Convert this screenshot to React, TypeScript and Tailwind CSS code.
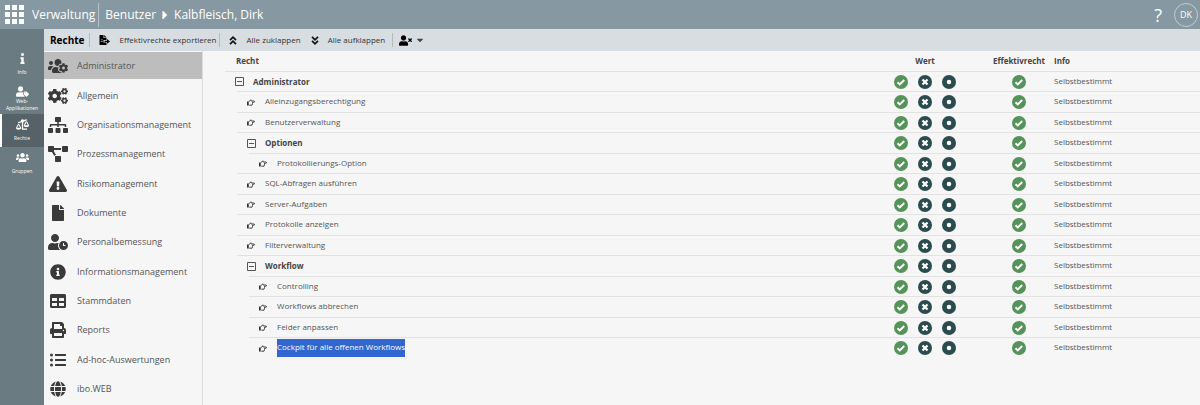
import type { ReactNode } from "react";
import {
  FaBalanceScaleLeft,
  FaCaretDown,
  FaCaretRight,
  FaCogs,
  FaExclamationTriangle,
  FaFile,
  FaGlobe,
  FaInfo,
  FaInfoCircle,
  FaListUl,
  FaPrint,
  FaProjectDiagram,
  FaSitemap,
  FaTable,
  FaUserClock,
  FaUsers,
  FaUsersCog,
  FaUserTag,
  FaUserTimes,
} from "react-icons/fa";

const navItems = [
  { label: "Info", icon: <FaInfo size={11} /> },
  { label: "Web-Applikationen", icon: <FaUserTag size={13} /> },
  { label: "Rechte", icon: <FaBalanceScaleLeft size={13} />, active: true },
  { label: "Gruppen", icon: <FaUsers size={13} /> },
];

const menuItems = [
  { label: "Administrator", icon: <FaUsersCog size={20} />, active: true },
  { label: "Allgemein", icon: <FaCogs size={20} /> },
  { label: "Organisationsmanagement", icon: <FaSitemap size={20} /> },
  { label: "Prozessmanagement", icon: <FaProjectDiagram size={20} /> },
  { label: "Risikomanagement", icon: <FaExclamationTriangle size={18} /> },
  { label: "Dokumente", icon: <FaFile size={16} /> },
  { label: "Personalbemessung", icon: <FaUserClock size={20} /> },
  { label: "Informationsmanagement", icon: <FaInfoCircle size={16} /> },
  { label: "Stammdaten", icon: <FaTable size={16} /> },
  { label: "Reports", icon: <FaPrint size={16} /> },
  { label: "Ad-hoc-Auswertungen", icon: <FaListUl size={16} /> },
  { label: "ibo.WEB", icon: <FaGlobe size={16} /> },
];

type Right = { name: string; depth: number; group?: boolean; selected?: boolean };

const rights: Right[] = [
  { name: "Administrator", depth: 0, group: true },
  { name: "Alleinzugangsberechtigung", depth: 1 },
  { name: "Benutzerverwaltung", depth: 1 },
  { name: "Optionen", depth: 1, group: true },
  { name: "Protokollierungs-Option", depth: 2 },
  { name: "SQL-Abfragen ausführen", depth: 1 },
  { name: "Server-Aufgaben", depth: 1 },
  { name: "Protokolle anzeigen", depth: 1 },
  { name: "Filterverwaltung", depth: 1 },
  { name: "Workflow", depth: 1, group: true },
  { name: "Controlling", depth: 2 },
  { name: "Workflows abbrechen", depth: 2 },
  { name: "Felder anpassen", depth: 2 },
  { name: "Cockpit für alle offenen Workflows", depth: 2, selected: true },
];

const indents = ["ml-0", "ml-3", "ml-6"];

function CheckIcon() {
  return (
    <svg viewBox="0 0 28 28" className="size-[14px]" aria-hidden="true">
      <circle cx="14" cy="14" r="14" fill="#56935a" />
      <path d="M7 14.500l4.500 4.500 9-9" fill="none" stroke="#fff" strokeWidth="3.800" />
    </svg>
  );
}

function CrossIcon() {
  return (
    <svg viewBox="0 0 28 28" className="size-[14px]" aria-hidden="true">
      <circle cx="14" cy="14" r="14" fill="#2b4b4e" />
      <path d="M9 9l10 10M19 9L9 19" fill="none" stroke="#fff" strokeWidth="4.500" />
    </svg>
  );
}

function DotIcon() {
  return (
    <svg viewBox="0 0 28 28" className="size-[14px]" aria-hidden="true">
      <circle cx="14" cy="14" r="14" fill="#2b4b4e" />
      <circle cx="14" cy="14" r="4.500" fill="#fff" />
    </svg>
  );
}

function MinusIcon() {
  return (
    <svg viewBox="0 0 9 9" className="size-[9px]" fill="none" stroke="#555" aria-hidden="true">
      <path d="M.5.5h8v8h-8zM2 4.500h5" />
    </svg>
  );
}

function HandIcon() {
  return (
    <svg viewBox="0 0 16 14" className="h-[7px] w-2" aria-hidden="true">
      <path d="M0 5h3.500v8H0z" fill="#333" />
      <path
        d="M4 5.500L7.500 1.500l1 2.500h5.500q1 0 1 1.200t-1 1.200H11v3l-1 3H4.500"
        fill="none"
        stroke="#333"
        strokeWidth="1.800"
      />
    </svg>
  );
}

function ExportIcon() {
  return (
    <svg viewBox="0 0 22 20" className="h-[10px] w-[11px]" aria-hidden="true">
      <path d="M1 0h8v6h6v4h-6v5h6v5H1zM10.500 0L15 4.800h-4.500z" />
      <path d="M11 11.500h5V8l6 4.800-6 4.700V14h-5z" />
      <path d="M3.500 9.500h4M3.500 13h4" stroke="#d8dde1" strokeWidth="1.200" />
    </svg>
  );
}

function DoubleChevron({ down }: { down?: boolean }) {
  return (
    <svg
      viewBox="0 0 8 9"
      className={down ? "h-[9px] w-2 rotate-180" : "h-[9px] w-2"}
      fill="none"
      stroke="#111"
      strokeWidth="1.700"
      aria-hidden="true"
    >
      <path d="M1 4.200l3-3 3 3M1 8.200l3-3 3 3" />
    </svg>
  );
}

function ToolButton({ icon, children }: { icon: ReactNode; children: ReactNode }) {
  return (
    <button className="flex items-center gap-[9px] text-[8px] text-[#333]">
      {icon}
      {children}
    </button>
  );
}

function Divider() {
  return <span className="h-[14px] w-px bg-[#b4babd]" />;
}

export default function App() {
  return (
    <div className="flex min-h-screen flex-col bg-[#f6f6f6] font-['Open_Sans',sans-serif] text-[#555]">
      <header className="flex h-[29px] items-center bg-[#8698a1] pr-[2px] pl-[5px] text-[12px] text-white">
        <button aria-label="Anwendungen" className="mr-2">
          <svg viewBox="0 0 19 19" className="size-[19px]" fill="#fff">
            <path d="M0 0h5v5H0zM7 0h5v5H7zM14 0h5v5h-5zM0 7h5v5H0zM7 7h5v5H7zM14 7h5v5h-5zM0 14h5v5H0zM7 14h5v5H7zM14 14h5v5h-5z" />
          </svg>
        </button>
        <a href="#">Verwaltung</a>
        <span className="mr-[6px] ml-[3px] h-6 w-px bg-[#b6c1c7]" />
        <a href="#">Benutzer</a>
        <FaCaretRight size={14} className="mx-[2px]" />
        <h1>Kalbfleisch, Dirk</h1>
        <button className="ml-auto text-[18px] leading-6">?</button>
        <button className="ml-3 size-6 rounded-full border border-[#c3ccd1] text-[9px]">DK</button>
      </header>

      <div className="flex grow">
        <nav className="w-11 shrink-0 bg-[#6b7b82] pt-[19px]">
          {navItems.map((item) => (
            <a
              key={item.label}
              href="#"
              className={
                item.active
                  ? "flex h-[33px] flex-col items-center border-l-2 border-white bg-[#566267] pt-1 pr-[2px] text-white"
                  : "flex h-[33px] flex-col items-center pt-1 text-white"
              }
            >
              <span className="flex h-[13px] items-center">{item.icon}</span>
              <span className="flex h-[14px] items-center text-center text-[5px] leading-[7px]">
                {item.label}
              </span>
            </a>
          ))}
        </nav>

        <div className="flex min-w-0 grow flex-col">
          <div className="flex h-[22px] items-center bg-[#d8dde1] pl-[6px]">
            <h2 className="mr-[5px] text-[10px] font-bold text-black">Rechte</h2>
            <Divider />
            <div className="mr-[3px] ml-[9px]">
              <ToolButton icon={<ExportIcon />}>Effektivrechte exportieren</ToolButton>
            </div>
            <Divider />
            <div className="mr-[7px] ml-[9px] flex items-center gap-[10px]">
              <ToolButton icon={<DoubleChevron />}>Alle zuklappen</ToolButton>
              <ToolButton icon={<DoubleChevron down />}>Alle aufklappen</ToolButton>
            </div>
            <Divider />
            <button aria-label="Benutzerrechte" className="ml-[6px] flex items-center gap-[3px] text-black">
              <FaUserTimes size={13} />
              <FaCaretDown size={10} className="text-[#444]" />
            </button>
          </div>

          <div className="flex grow">
            <ul className="w-[159px] shrink-0 border-r border-[#dcdcdc] pt-px">
              {menuItems.map((item) => (
                <li key={item.label} className="h-[29px] nth-[3n+1]:h-[30px]">
                  <a
                    href="#"
                    className={
                      item.active
                        ? "flex h-[27px] items-center gap-[9px] bg-[#bdbdbd] pl-1 text-[9px]"
                        : "flex h-[27px] items-center gap-[9px] pl-1 text-[9px]"
                    }
                  >
                    <span className="flex w-5 justify-center text-[#3a3a3a]">{item.icon}</span>
                    {item.label}
                  </a>
                </li>
              ))}
            </ul>

            <main className="min-w-0 grow pl-[22px]">
              <table className="w-full table-fixed border-separate border-spacing-0 text-[8px] leading-4">
                <thead className="text-[#444]">
                  <tr className="h-5">
                    <th className="p-0 pl-[11px] text-left">Recht</th>
                    <th className="w-[118px] p-0">Wert</th>
                    <th className="w-[70px] p-0">Effektivrecht</th>
                    <th className="w-[146px] p-0 text-left">Info</th>
                  </tr>
                </thead>
                <tbody>
                  {rights.map((right) => (
                    <tr key={right.name} className="h-5 even:h-[21px]">
                      <td className="h-[inherit] p-0">
                        <div
                          className={`${indents[right.depth]} flex h-full items-center border-t border-[#e2e2e2] pl-[10px]`}
                        >
                          <span className="flex w-[18px]">
                            {right.group ? (
                              <button aria-label={`${right.name} zuklappen`}>
                                <MinusIcon />
                              </button>
                            ) : (
                              <HandIcon />
                            )}
                          </span>
                          {right.group ? (
                            <span className="font-bold text-[#444]">{right.name}</span>
                          ) : (
                            <span
                              className={
                                right.selected ? "bg-[#3166d0] pb-0.5 text-white" : "pb-0.5"
                              }
                            >
                              {right.name}
                            </span>
                          )}
                        </div>
                      </td>
                      <td className="border-t border-[#e2e2e2] p-0">
                        <div className="flex items-center justify-center gap-[10px]">
                          <button aria-label="Erlauben">
                            <CheckIcon />
                          </button>
                          <button aria-label="Verweigern">
                            <CrossIcon />
                          </button>
                          <button aria-label="Neutral">
                            <DotIcon />
                          </button>
                        </div>
                      </td>
                      <td className="border-t border-[#e2e2e2] p-0">
                        <div className="flex justify-center">
                          <CheckIcon />
                        </div>
                      </td>
                      <td className="border-t border-[#e2e2e2] p-0 pb-0.5">Selbstbestimmt</td>
                    </tr>
                  ))}
                </tbody>
              </table>
            </main>
          </div>
        </div>
      </div>
    </div>
  );
}
